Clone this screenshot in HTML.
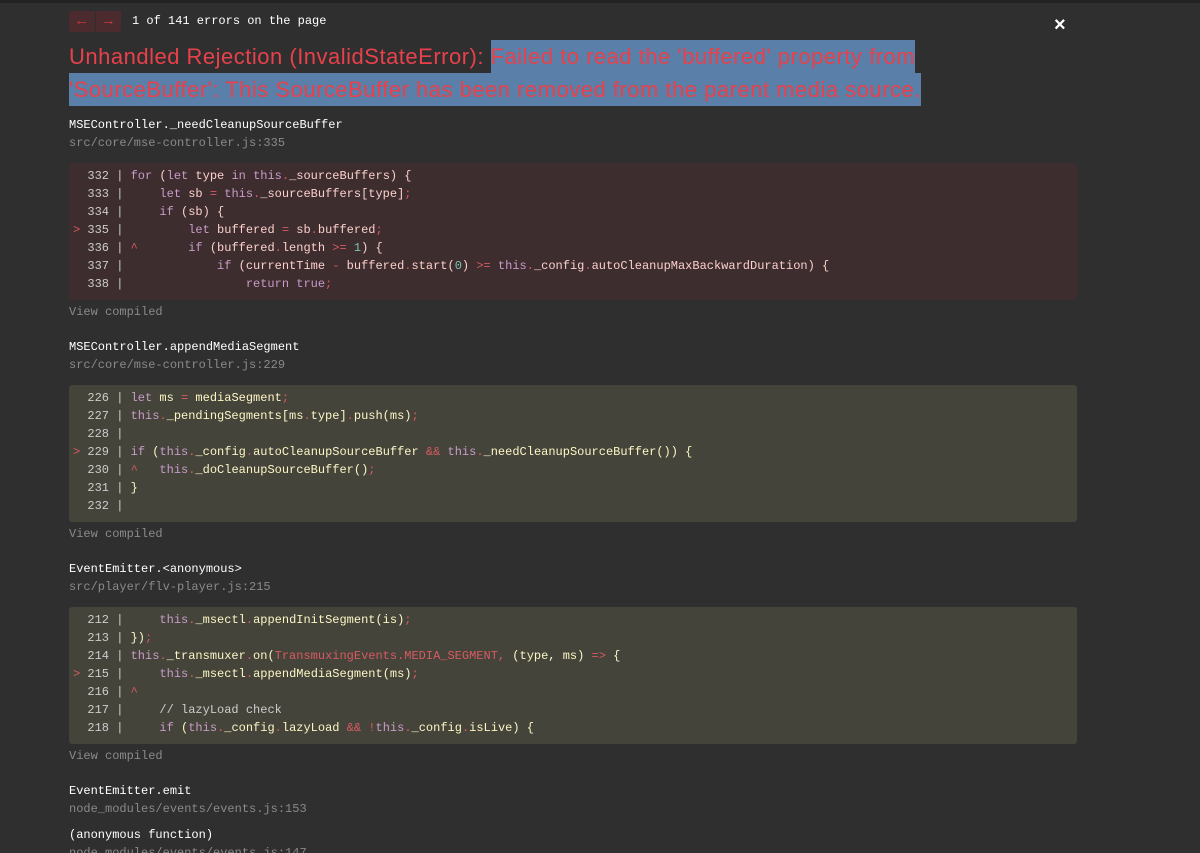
<!DOCTYPE html>
<html><head><meta charset="utf-8"><style>
*{margin:0;padding:0;box-sizing:border-box}
html,body{width:1200px;height:853px;overflow:hidden}
body{background:#2f2f2f;position:relative;font-family:"Liberation Mono",monospace;font-size:12px;color:#fff}
.top{position:absolute;left:0;top:0;width:1200px;height:3px;background:#232323}
.a{position:absolute;white-space:pre}
.nav{position:absolute;left:69px;top:11px;width:52px;height:21px;display:flex;gap:1px}
.nav span{flex:1;background:#4b2b2d;color:#c8383f;font:15px "Liberation Sans",sans-serif;text-align:center;line-height:20px;border-radius:2px}
.title{position:absolute;left:69px;top:40px;font:22px/33px "Liberation Sans",sans-serif;letter-spacing:0.5px;color:#e8414b;width:900px}
.hl{background:#5a7fa9;padding:4px 0}
.fn{color:#fff}
.file{color:#8a8a8a}
.blk{position:absolute;left:69px;width:1008px;border-radius:3px;padding:4px 0 0 0}
.red{background:#3d2d2e;color:#fcd0cc}
.yel{background:#45443b;color:#fcf6c4}
.blk div{height:18px;line-height:18px;white-space:pre;padding-left:4px}
.n{color:#ccc}
.k{color:#c89bc8}
.p{color:#d75a62}
.g{color:#7cc4b4}
.c{color:#ccc}
</style></head><body>
<div class="top"></div>
<div class="nav"><span>←</span><span>→</span></div>
<div class="a" style="left:132px;top:14px;color:#fff">1 of 141 errors on the page</div>
<div class="a" style="left:1054px;top:14px;font:bold 20px 'Liberation Sans',sans-serif">×</div>
<div class="title">Unhandled Rejection (InvalidStateError): <span class="hl">Failed to read the 'buffered' property from 'SourceBuffer': This SourceBuffer has been removed from the parent media source.</span></div>

<div class="a fn" style="left:69px;top:118px">MSEController._needCleanupSourceBuffer</div>
<div class="a file" style="left:69px;top:136px">src/core/mse-controller.js:335</div>
<div class="blk red" style="top:163px;height:137px">
<div><span class="n">  332 | </span><span class="k">for</span> (<span class="k">let</span> type <span class="k">in</span> <span class="k">this</span><span class="p">.</span>_sourceBuffers) {</div>
<div><span class="n">  333 | </span>    <span class="k">let</span> sb <span class="p">=</span> <span class="k">this</span><span class="p">.</span>_sourceBuffers[type]<span class="p">;</span></div>
<div><span class="n">  334 | </span>    <span class="k">if</span> (sb) {</div>
<div><span class="p">&gt;</span><span class="n"> 335 | </span>        <span class="k">let</span> buffered <span class="p">=</span> sb<span class="p">.</span>buffered<span class="p">;</span></div>
<div><span class="n">  336 | </span><span class="p">^</span>       <span class="k">if</span> (buffered<span class="p">.</span>length <span class="p">&gt;=</span> <span class="g">1</span>) {</div>
<div><span class="n">  337 | </span>            <span class="k">if</span> (currentTime <span class="p">-</span> buffered<span class="p">.</span>start(<span class="g">0</span>) <span class="p">&gt;=</span> <span class="k">this</span><span class="p">.</span>_config<span class="p">.</span>autoCleanupMaxBackwardDuration) {</div>
<div><span class="n">  338 | </span>                <span class="k">return true</span><span class="p">;</span></div>
</div>
<div class="a file" style="left:69px;top:305px">View compiled</div>

<div class="a fn" style="left:69px;top:340px">MSEController.appendMediaSegment</div>
<div class="a file" style="left:69px;top:358px">src/core/mse-controller.js:229</div>
<div class="blk yel" style="top:385px;height:137px">
<div><span class="n">  226 | </span><span class="k">let</span> ms <span class="p">=</span> mediaSegment<span class="p">;</span></div>
<div><span class="n">  227 | </span><span class="k">this</span><span class="p">.</span>_pendingSegments[ms<span class="p">.</span>type]<span class="p">.</span>push(ms)<span class="p">;</span></div>
<div><span class="n">  228 | </span></div>
<div><span class="p">&gt;</span><span class="n"> 229 | </span><span class="k">if</span> (<span class="k">this</span><span class="p">.</span>_config<span class="p">.</span>autoCleanupSourceBuffer <span class="p">&amp;&amp;</span> <span class="k">this</span><span class="p">.</span>_needCleanupSourceBuffer()) {</div>
<div><span class="n">  230 | </span><span class="p">^</span>   <span class="k">this</span><span class="p">.</span>_doCleanupSourceBuffer()<span class="p">;</span></div>
<div><span class="n">  231 | </span>}</div>
<div><span class="n">  232 | </span></div>
</div>
<div class="a file" style="left:69px;top:527px">View compiled</div>

<div class="a fn" style="left:69px;top:562px">EventEmitter.&lt;anonymous&gt;</div>
<div class="a file" style="left:69px;top:580px">src/player/flv-player.js:215</div>
<div class="blk yel" style="top:607px;height:137px">
<div><span class="n">  212 | </span>    <span class="k">this</span><span class="p">.</span>_msectl<span class="p">.</span>appendInitSegment(is)<span class="p">;</span></div>
<div><span class="n">  213 | </span>})<span class="p">;</span></div>
<div><span class="n">  214 | </span><span class="k">this</span><span class="p">.</span>_transmuxer<span class="p">.</span>on(<span class="p">TransmuxingEvents.MEDIA_SEGMENT,</span> (type, ms) <span class="p">=&gt;</span> {</div>
<div><span class="p">&gt;</span><span class="n"> 215 | </span>    <span class="k">this</span><span class="p">.</span>_msectl<span class="p">.</span>appendMediaSegment(ms)<span class="p">;</span></div>
<div><span class="n">  216 | </span><span class="p">^</span></div>
<div><span class="n">  217 | </span>    <span class="c">// lazyLoad check</span></div>
<div><span class="n">  218 | </span>    <span class="k">if</span> (<span class="k">this</span><span class="p">.</span>_config<span class="p">.</span>lazyLoad <span class="p">&amp;&amp; !</span><span class="k">this</span><span class="p">.</span>_config<span class="p">.</span>isLive) {</div>
</div>
<div class="a file" style="left:69px;top:749px">View compiled</div>

<div class="a fn" style="left:69px;top:784px">EventEmitter.emit</div>
<div class="a file" style="left:69px;top:802px">node_modules/events/events.js:153</div>
<div class="a fn" style="left:69px;top:828px">(anonymous function)</div>
<div class="a file" style="left:69px;top:846px">node_modules/events/events.js:147</div>
</body></html>
